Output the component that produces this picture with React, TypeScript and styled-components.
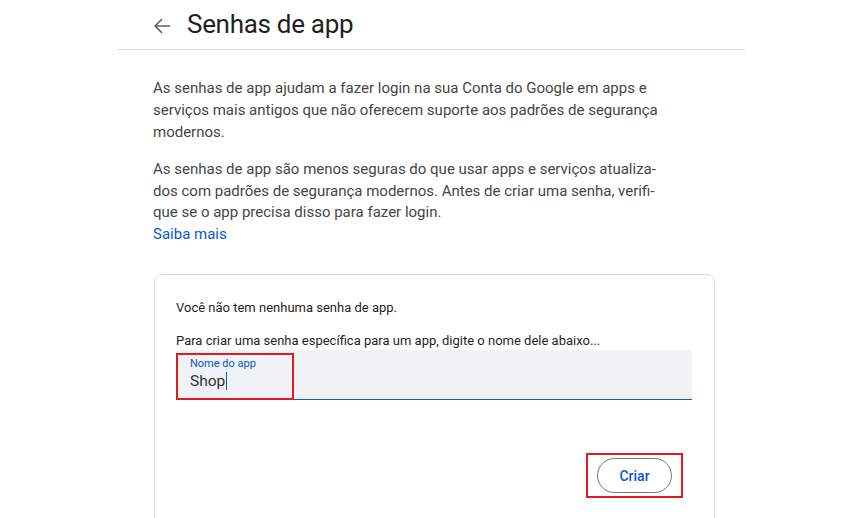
import React from 'react';
import styled, { createGlobalStyle } from 'styled-components';

const GlobalStyle = createGlobalStyle`
  html, body {
    margin: 0;
    padding: 0;
    background: #ffffff;
  }
  body {
    font-family: Roboto, "Liberation Sans", Arial, sans-serif;
    color: #1f1f1f;
  }
`;

const ArrowIcon = () => (
  <svg width="24" height="24" viewBox="0 0 24 24" aria-hidden="true">
    <path d="M20 11.25H6.9l5.6-5.6L11.45 4.6 4.05 12l7.4 7.4 1.05-1.05-5.6-5.6H20z" fill="#5f6368" />
  </svg>
);

export default function App() {
  return (
    <>
      <GlobalStyle />
      <Page>
        <Column>
          <Header>
            <BackButton aria-label="Voltar">
              <ArrowIcon />
            </BackButton>
            <Title>Senhas de app</Title>
          </Header>
          <Content>
            <Paragraph>
              As senhas de app ajudam a fazer login na sua Conta do Google em apps e serviços mais
              antigos que não oferecem suporte aos padrões de segurança modernos.
            </Paragraph>
            <Paragraph $tight>
              As senhas de app são menos seguras do que usar apps e serviços atualiza&shy;dos com
              padrões de segurança modernos. Antes de criar uma senha, verifi&shy;que se o app
              precisa disso para fazer login.
              <br />
              <Link href="#">Saiba mais</Link>
            </Paragraph>
            <Card>
              <CardText>Você não tem nenhuma senha de app.</CardText>
              <CardText $last>
                Para criar uma senha específica para um app, digite o nome dele abaixo...
              </CardText>
              <Field>
                <FieldMark>
                  <FieldLabel>Nome do app</FieldLabel>
                  <FieldValue>
                    Shop<Caret />
                  </FieldValue>
                </FieldMark>
              </Field>
              <Actions>
                <ButtonMark>
                  <PillButton>Criar</PillButton>
                </ButtonMark>
              </Actions>
            </Card>
          </Content>
        </Column>
      </Page>
    </>
  );
}

const Page = styled.div`
  width: 862px;
  height: 518px;
  overflow: hidden;
`;

const Column = styled.div`
  width: 628px;
  margin-left: 117px;
`;

const Header = styled.div`
  display: flex;
  align-items: center;
  height: 50px;
  border-bottom: 1px solid #dadce0;
  padding-left: 33px;
  box-sizing: border-box;
`;

const BackButton = styled.button`
  display: flex;
  align-items: center;
  justify-content: center;
  width: 24px;
  height: 24px;
  padding: 0;
  border: 0;
  background: none;
  margin: 2px 13px 0 0;
`;

const Title = styled.h1`
  margin: 0 0 2px;
  font-size: 26px;
  font-weight: 400;
  color: #1f1f1f;
  letter-spacing: -0.3px;
`;

const Content = styled.div`
  padding: 27px 0 0 36px;
`;

const Paragraph = styled.p<{ $tight?: boolean }>`
  margin: 0 0 16px;
  width: 510px;
  font-size: 15px;
  line-height: ${(p) => (p.$tight ? '21.6px' : '22px')};
  color: #444746;
  hyphens: manual;
`;

const Link = styled.a`
  color: #0b57d0;
  text-decoration: none;
`;

const Card = styled.div`
  margin: 29px 0 0 1px;
  width: 561px;
  height: 260px;
  box-sizing: border-box;
  border: 1px solid #dadce0;
  border-radius: 8px;
  padding: 24px 22px 0 21px;
`;

const CardText = styled.p<{ $last?: boolean }>`
  margin: 0 0 ${(p) => (p.$last ? '0' : '15px')};
  font-size: 13px;
  line-height: 18px;
  color: #1f1f1f;
`;

const Field = styled.div`
  height: 49px;
  background: #f0f2f5;
  border-radius: 4px 4px 0 0;
  border-bottom: 1px solid #0b57d0;
  display: flex;
  align-items: flex-start;
`;

const Mark = styled.div`
  border: 2px solid #e21b23;
  box-sizing: border-box;
`;

const FieldMark = styled(Mark)`
  width: 118px;
  height: 47px;
  margin-top: 3px;
  padding: 2px 0 0 12px;
`;

const ButtonMark = styled(Mark)`
  padding: 3px 9px;
`;

const FieldLabel = styled.div`
  font-size: 11px;
  line-height: 13px;
  color: #0b57d0;
`;

const FieldValue = styled.div`
  display: flex;
  align-items: center;
  font-size: 15.5px;
  line-height: 22px;
  color: #303134;
`;

const Caret = styled.span`
  display: inline-block;
  width: 1px;
  height: 18px;
  background: #0b57d0;
  margin-left: 1px;
`;

const Actions = styled.div`
  display: flex;
  justify-content: flex-end;
  margin-top: 53px;
  margin-right: 9px;
`;

const PillButton = styled.button`
  display: block;
  width: 75px;
  height: 35px;
  border: 1px solid #747775;
  border-radius: 18px;
  background: #ffffff;
  color: #0b57d0;
  font-family: Roboto, "Liberation Sans", Arial, sans-serif;
  font-size: 14px;
  font-weight: 500;
  padding: 0;
`;
